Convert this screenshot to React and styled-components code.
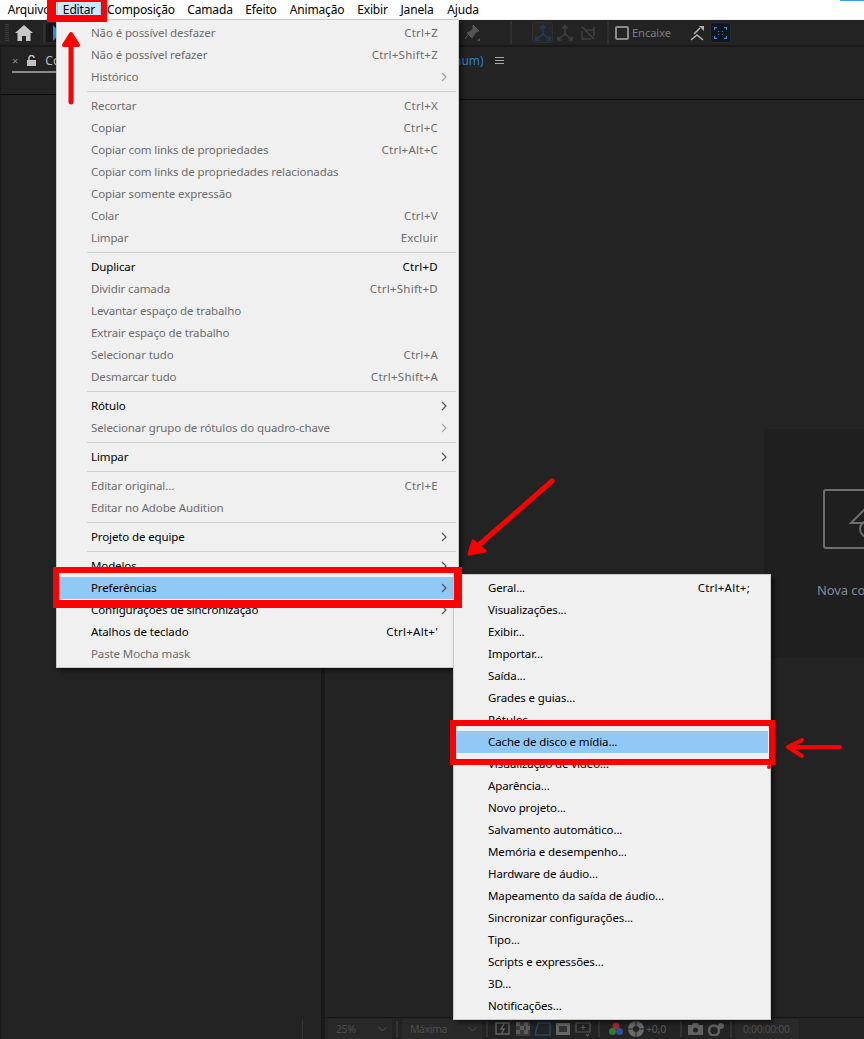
import React from 'react';
import styled, { createGlobalStyle } from 'styled-components';

const GlobalStyle = createGlobalStyle`
  html, body, #root {
    margin: 0;
    height: 100%;
  }
  body {
    background: #232323;
    font-family: "Noto Sans", "Open Sans", sans-serif;
    font-size: 12px;
    overflow: hidden;
  }
`;

const Screen = styled.div`
  position: relative;
  display: flex;
  flex-direction: column;
  height: 100vh;
  overflow: hidden;
`;

const MenuBar = styled.nav`
  display: flex;
  flex: none;
  height: 19px;
  padding-left: 1px;
  background: #fff;
  border-bottom: 1px solid #f0f0f0;
`;

const BarItem = styled.span`
  display: flex;
  align-items: center;
  width: ${p => p.$w}px;
  justify-content: center;
  box-sizing: border-box;
  color: #000;
  letter-spacing: -0.15px;
  ${p => p.$active && 'background: #cce8ff; border: 1px solid #99d1ff; height: 18px;'}
`;

const WindowEdge = styled.span`
  margin-left: auto;
  width: 24px;
  height: 1px;
  background: #3b9bf0;
`;

const Toolbar = styled.div`
  display: flex;
  flex: none;
  align-items: center;
  height: 25px;
  padding-left: 5px;
  background: #232323;
  border-bottom: 2px solid #191919;
`;

const Grip = styled.span`
  width: 4px;
  height: 18px;
  margin-right: 6px;
  background: repeating-linear-gradient(#3c3c3c 0 1px, transparent 1px 2px);
`;

const ToolDivider = styled.span`
  flex: none;
  width: 2px;
  height: 23px;
  margin-left: ${p => p.$left}px;
  background: #2f2f2f;
`;

const ToolButton = styled.span`
  display: flex;
  flex: none;
  align-items: center;
  justify-content: center;
  box-sizing: border-box;
  width: ${p => p.$w || 21}px;
  height: 21px;
  margin-left: ${p => p.$ml || 0}px;
  border-radius: 3px;
  background: ${p => p.$bg || 'transparent'};
  border: 1px solid ${p => p.$line || 'transparent'};
`;

const SnapBox = styled.span`
  flex: none;
  box-sizing: border-box;
  width: 14px;
  height: 14px;
  margin-left: 6px;
  border: 2px solid #8a8a8a;
  border-radius: 2px;
`;

const SnapLabel = styled.span`
  margin-left: 3px;
  color: #7d7d7d;
  font-size: 11px;
`;

const Panels = styled.div`
  display: flex;
  flex: 1;
  min-height: 0;
`;

const LeftPanel = styled.section`
  display: flex;
  flex: none;
  flex-direction: column;
  box-sizing: border-box;
  width: 321px;
  background: #232323;
  border-left: 1px solid #1a1a1a;
`;

const LeftHeader = styled.header`
  display: flex;
  flex: none;
  align-items: flex-start;
  box-sizing: border-box;
  height: 48px;
  padding: 6px 0 0 11px;
  border-bottom: 1px solid #0c0c0c;
`;

const TabClose = styled.span`
  color: #8c8c8c;
  font-size: 11px;
  line-height: 16px;
`;

const TabLock = styled.span`
  display: flex;
  margin: 2px 0 0 9px;
`;

const TabTitle = styled.span`
  margin-left: 9px;
  color: #bdbdbd;
  line-height: 16px;
`;

const TabUnderline = styled.div`
  width: 44px;
  height: 2px;
  margin: -24px 0 0 11px;
  background: #8a8a8a;
`;

const LeftBody = styled.div`
  flex: 1;
  margin-top: 22px;
`;

const LeftFooter = styled.footer`
  display: flex;
  flex: none;
  justify-content: flex-end;
  height: 19px;
  padding-right: 18px;
`;

const FooterTick = styled.span`
  width: 1px;
  background: #353535;
`;

const Gutter = styled.div`
  flex: none;
  width: 4px;
  background: #191919;
`;

const RightPanel = styled.section`
  display: flex;
  flex: 1;
  flex-direction: column;
  min-width: 0;
  background: #232323;
  overflow: hidden;
`;

const RightHeader = styled.header`
  display: flex;
  flex: none;
  align-items: flex-start;
  box-sizing: border-box;
  height: 53px;
  padding: 6px 0 0 129px;
  border-bottom: 1px solid #0c0c0c;
`;

const CompName = styled.span`
  color: #2a7fd6;
  line-height: 16px;
`;

const MenuLines = styled.span`
  display: flex;
  margin: 3px 0 0 11px;
`;

const Viewer = styled.div`
  flex: 1;
  min-height: 0;
  padding: 329px 0 0 439px;
`;

const StartCard = styled.div`
  box-sizing: border-box;
  width: 300px;
  height: 229px;
  padding: 60px 0 0 59px;
  background: #1f1f1f;
`;

const StartLabel = styled.div`
  margin: 25px 0 0 -6px;
  color: #7f8b96;
  font-size: 13px;
  letter-spacing: -0.1px;
  line-height: 20px;
`;

const ViewerFooter = styled.footer`
  display: flex;
  flex: none;
  align-items: stretch;
  box-sizing: border-box;
  height: 22px;
  padding: 1px 0 0 3px;
  border-top: 1px solid #191919;
`;

const SelectField = styled.span`
  display: flex;
  flex: none;
  align-items: center;
  justify-content: space-between;
  box-sizing: border-box;
  width: ${p => p.$w}px;
  padding: 0 5px 0 8px;
  border-radius: 2px 2px 0 0;
  background: #292929;
  color: #4d4d4d;
  font-size: 10.5px;
  letter-spacing: -0.4px;
`;

const FooterDivider = styled.span`
  flex: none;
  width: 2px;
  margin: 2px ${p => p.$right || 4}px 2px ${p => p.$left || 4}px;
  background: #333;
`;

const FooterIcon = styled.span`
  display: flex;
  flex: none;
  align-items: center;
  justify-content: center;
  width: ${p => p.$w || 20}px;
`;

const Exposure = styled.span`
  flex: none;
  display: flex;
  align-items: center;
  width: 20px;
  color: #5a5a5a;
  font-size: 10.5px;
  letter-spacing: -0.2px;
`;

const Menu = styled.div`
  position: absolute;
  top: ${p => p.$top}px;
  left: ${p => p.$left}px;
  box-sizing: border-box;
  width: ${p => p.$w}px;
  padding: 2px;
  background: #f0f0f0;
  border: 1px solid #c9c9c9;
  box-shadow: 3px 3px 4px rgba(0, 0, 0, 0.5);
`;

const Row = styled.div`
  display: grid;
  grid-template-columns: 1fr auto 18px;
  align-items: center;
  box-sizing: border-box;
  height: 22px;
  padding: 0 0 1px 32px;
  font-size: 11.5px;
  letter-spacing: -0.12px;
  color: ${p => (p.$off ? '#6d6d6d' : '#000')};
  background: ${p => (p.$hot ? '#90c8f6' : 'transparent')};
`;

const Shortcut = styled.span`
  letter-spacing: 0.25px;
`;

const Chevron = styled.svg`
  justify-self: end;
  margin-right: 9px;
`;

const Separator = styled.div`
  height: 1px;
  margin: 3px 0 3px 28px;
  background: #cfcfcf;
`;

const Callout = styled.div`
  position: absolute;
  top: ${p => p.$y}px;
  left: ${p => p.$x}px;
  width: ${p => p.$w}px;
  height: ${p => p.$h}px;
  box-sizing: border-box;
  border-style: solid;
  border-color: #f00;
  border-width: ${p => p.$border};
`;

const Pointer = styled.svg`
  position: absolute;
  top: 0;
  left: 0;
  width: 864px;
  height: 1039px;
  pointer-events: none;
`;

const editMenu = [
  { label: 'Não é possível desfazer', keys: 'Ctrl+Z', off: true },
  { label: 'Não é possível refazer', keys: 'Ctrl+Shift+Z', off: true },
  { label: 'Histórico', sub: true, off: true },
  'sep',
  { label: 'Recortar', keys: 'Ctrl+X', off: true },
  { label: 'Copiar', keys: 'Ctrl+C', off: true },
  { label: 'Copiar com links de propriedades', keys: 'Ctrl+Alt+C', off: true },
  { label: 'Copiar com links de propriedades relacionadas', off: true },
  { label: 'Copiar somente expressão', off: true },
  { label: 'Colar', keys: 'Ctrl+V', off: true },
  { label: 'Limpar', keys: 'Excluir', off: true },
  'sep',
  { label: 'Duplicar', keys: 'Ctrl+D' },
  { label: 'Dividir camada', keys: 'Ctrl+Shift+D', off: true },
  { label: 'Levantar espaço de trabalho', off: true },
  { label: 'Extrair espaço de trabalho', off: true },
  { label: 'Selecionar tudo', keys: 'Ctrl+A', off: true },
  { label: 'Desmarcar tudo', keys: 'Ctrl+Shift+A', off: true },
  'sep',
  { label: 'Rótulo', sub: true },
  { label: 'Selecionar grupo de rótulos do quadro-chave', sub: true, off: true },
  'sep',
  { label: 'Limpar', sub: true },
  'sep',
  { label: 'Editar original...', keys: 'Ctrl+E', off: true },
  { label: 'Editar no Adobe Audition', off: true },
  'sep',
  { label: 'Projeto de equipe', sub: true },
  'sep',
  { label: 'Modelos', sub: true },
  { label: 'Preferências', sub: true, hot: true },
  { label: 'Configurações de sincronização', sub: true },
  { label: 'Atalhos de teclado', keys: "Ctrl+Alt+'" },
  { label: 'Paste Mocha mask', off: true },
];

const prefsMenu = [
  { label: 'Geral...', keys: 'Ctrl+Alt+;' },
  { label: 'Visualizações...' },
  { label: 'Exibir...' },
  { label: 'Importar...' },
  { label: 'Saída...' },
  { label: 'Grades e guias...' },
  { label: 'Rótulos...' },
  { label: 'Cache de disco e mídia...', hot: true },
  { label: 'Visualização de vídeo...' },
  { label: 'Aparência...' },
  { label: 'Novo projeto...' },
  { label: 'Salvamento automático...' },
  { label: 'Memória e desempenho...' },
  { label: 'Hardware de áudio...' },
  { label: 'Mapeamento da saída de áudio...' },
  { label: 'Sincronizar configurações...' },
  { label: 'Tipo...' },
  { label: 'Scripts e expressões...' },
  { label: '3D...' },
  { label: 'Notificações...' },
];

const barItems = [
  ['Arquivo', 56], ['Editar', 44], ['Composição', 80], ['Camada', 58], ['Efeito', 44],
  ['Animação', 68], ['Exibir', 43], ['Janela', 46], ['Ajuda', 46],
];

const MenuItems = ({ items }) =>
  items.map((item, i) =>
    item === 'sep' ? (
      <Separator key={i} />
    ) : (
      <Row key={i} $off={item.off} $hot={item.hot}>
        <span>{item.label}</span>
        <Shortcut>{item.keys}</Shortcut>
        {item.sub ? (
          <Chevron width="6" height="10" viewBox="0 0 6 10">
            <path d="M1 1l4 4-4 4" fill="none" stroke={item.off ? '#a5a5a5' : '#555'} strokeWidth="1.2" />
          </Chevron>
        ) : <span />}
      </Row>
    )
  );

const AxisIcon = ({ color }) => (
  <svg width="18" height="18" viewBox="0 0 18 18" fill="none" stroke={color} strokeWidth="1.6">
    <path d="M9 2v8M9 10l-6 5M9 10l6 5" />
    <path d="M6.5 4.5L9 1.5l2.5 3M2 12.5v3.5h3.5M16 12.5v3.5h-3.5" />
  </svg>
);

export default function App() {
  return (
    <Screen>
      <GlobalStyle />
      <MenuBar>
        {barItems.map(([label, w]) => (
          <BarItem key={label} $w={w} $active={label === 'Editar'}>{label}</BarItem>
        ))}
        <WindowEdge />
      </MenuBar>

      <Toolbar>
        <Grip />
        <svg width="18" height="16" viewBox="0 0 18 16">
          <path d="M9 0L0 8h2.500v8h4.500v-5h4v5h4.500V8H18z" fill="#c8c8c8" />
        </svg>
        <ToolDivider $left={10} />
        <ToolButton $w={24} $bg="#161616" $line="#2c2c2c">
          <svg width="8" height="16" viewBox="0 0 8 16">
            <path d="M0 0l7 8-7 8z" fill="#2d8ceb" />
          </svg>
        </ToolButton>
        <ToolButton $ml={392}>
          <svg width="18" height="18" viewBox="0 0 18 18">
            <path d="M10 1l6 6-3 1-3 4-1 2-5-5 2-1 4-3zM5 11l-3 4" fill="#555" stroke="#555" />
            <path d="M17 17v-3l-3 3z" fill="#555" />
          </svg>
        </ToolButton>
        <ToolDivider $left={28} />
        <ToolButton $ml={20} $bg="#262626" $line="#303030">
          <AxisIcon color="#1f3d5e" />
        </ToolButton>
        <ToolButton $ml={1}><AxisIcon color="#404040" /></ToolButton>
        <ToolButton $ml={2}>
          <svg width="16" height="16" viewBox="0 0 16 16" fill="none" stroke="#404040" strokeWidth="1.500">
            <path d="M2 2l4 3h8M14 2v9M2 2l12 12M2 6v8h9" />
          </svg>
        </ToolButton>
        <ToolDivider $left={9} />
        <SnapBox />
        <SnapLabel>Encaixe</SnapLabel>
        <ToolButton $ml={15}>
          <svg width="16" height="16" viewBox="0 0 16 16" fill="none" stroke="#b5b5b5" strokeWidth="1.500">
            <path d="M2 15l6-5 6 5M5 9l6-6" />
            <path d="M10 1h5v5z" fill="#b5b5b5" stroke="none" />
          </svg>
        </ToolButton>
        <ToolButton $ml={3} $bg="#12171c" $line="#2b2b2b">
          <svg width="13" height="12" viewBox="0 0 13 12" fill="none" stroke="#2d84d8" strokeWidth="1.200">
            <path d="M.6 3V.6h2.400M10 .6h2.400V3M12.400 9v2.400H10M3 11.400H.6V9" />
            <path d="M4.500 4v1M8.500 4v1M4.500 7v1M8.500 7v1" />
          </svg>
        </ToolButton>
      </Toolbar>

      <Panels>
        <LeftPanel>
          <LeftHeader>
            <TabClose>×</TabClose>
            <TabLock>
              <svg width="9" height="11" viewBox="0 0 9 11">
                <path d="M2 5V3a2.500 2.500 0 0 1 5 0" fill="none" stroke="#c0c0c0" strokeWidth="1.500" />
                <path d="M0 5h9v6H0z" fill="#c0c0c0" />
              </svg>
            </TabLock>
            <TabTitle>Co</TabTitle>
          </LeftHeader>
          <TabUnderline />
          <LeftBody />
          <LeftFooter><FooterTick /></LeftFooter>
        </LeftPanel>
        <Gutter />
        <RightPanel>
          <RightHeader>
            <CompName>num)</CompName>
            <MenuLines>
              <svg width="9" height="9" viewBox="0 0 9 9" stroke="#aaa">
                <path d="M0 1.500h9M0 4.500h9M0 7.500h9" />
              </svg>
            </MenuLines>
          </RightHeader>
          <Viewer>
            <StartCard>
              <svg width="80" height="62" viewBox="0 0 80 62" fill="none" stroke="#6e6e6e" strokeWidth="2">
                <rect x="1" y="1" width="78" height="58" rx="2" />
                <path d="M44 18L28 34h14" />
                <circle cx="45" cy="40" r="8" />
              </svg>
              <StartLabel>Nova co</StartLabel>
            </StartCard>
          </Viewer>
          <ViewerFooter>
            <SelectField $w={64}>
              25%
              <svg width="9" height="6" viewBox="0 0 9 6"><path d="M.5 1l4 4 4-4" fill="none" stroke="#4d4d4d" /></svg>
            </SelectField>
            <FooterDivider />
            <SelectField $w={80}>
              Máxima
              <svg width="9" height="6" viewBox="0 0 9 6"><path d="M.5 1l4 4 4-4" fill="none" stroke="#4d4d4d" /></svg>
            </SelectField>
            <FooterDivider $right={5} />
            <FooterIcon>
              <svg width="16" height="15" viewBox="0 0 16 15" fill="none" stroke="#666" strokeWidth="1.300">
                <path d="M1 1h13v11H1zM9 2L6 7h3l-2 4" />
              </svg>
            </FooterIcon>
            <FooterIcon>
              <svg width="14" height="14" viewBox="0 0 14 14">
                <rect width="14" height="14" fill="#3a3a3a" />
                <path d="M0 0h4v4H0zM8 0h4v4H8zM4 4h4v4H4zM10 4h4v4h-4zM0 8h4v4H0zM8 8h4v4H8z" fill="#5c5c5c" />
              </svg>
            </FooterIcon>
            <FooterIcon>
              <svg width="18" height="16" viewBox="0 0 18 16" fill="none" stroke="#24466b" strokeWidth="1.500">
                <path d="M4 2h12v12H1z" />
              </svg>
            </FooterIcon>
            <FooterIcon>
              <svg width="14" height="12" viewBox="0 0 14 12"><path d="M0 0h14v12H0z" fill="#666" /><path d="M3 3h8v6H3z" fill="#333" /></svg>
            </FooterIcon>
            <FooterIcon>
              <svg width="16" height="15" viewBox="0 0 16 15" fill="none" stroke="#565656" strokeWidth="1.200">
                <path d="M1 1h14v9H1zM8 3v5M5.500 5.500h5M11 12l1.500 2 1.500-2" />
              </svg>
            </FooterIcon>
            <FooterDivider $left={5} $right={6} />
            <FooterIcon>
              <svg width="14" height="15" viewBox="0 0 14 15">
                <circle cx="7" cy="4" r="3.500" fill="#a52a2a" />
                <circle cx="3.500" cy="9.500" r="3.500" fill="#2e7d32" />
                <circle cx="10.500" cy="9.500" r="3.500" fill="#2b4f9e" />
              </svg>
            </FooterIcon>
            <FooterIcon>
              <svg width="16" height="16" viewBox="0 0 16 16">
                <circle cx="8" cy="8" r="8" fill="#6a6a6a" />
                <circle cx="8" cy="8" r="3" fill="#232323" />
                <path d="M8 0v5M16 8h-5M8 16v-5M0 8h5" stroke="#232323" />
              </svg>
            </FooterIcon>
            <Exposure>+0,0</Exposure>
            <FooterDivider $left={14} $right={4} />
            <FooterIcon $w={18}>
              <svg width="15" height="12" viewBox="0 0 15 12">
                <path d="M0 2h4l1-2h5l1 2h4v10H0z" fill="#626262" />
                <circle cx="7.500" cy="7" r="2.500" fill="#232323" />
              </svg>
            </FooterIcon>
            <FooterIcon $w={22}>
              <svg width="18" height="13" viewBox="0 0 18 13">
                <circle cx="8" cy="7.500" r="5" fill="none" stroke="#626262" strokeWidth="2.500" />
                <circle cx="15" cy="3" r="3" fill="#626262" />
              </svg>
            </FooterIcon>
            <FooterDivider $left={4} $right={3} />
            <SelectField $w={64}>0:00:00:00</SelectField>
          </ViewerFooter>
        </RightPanel>
      </Panels>

      <Menu $top={19} $left={56} $w={403}>
        <MenuItems items={editMenu} />
      </Menu>
      <Menu $top={574} $left={453} $w={318}>
        <MenuItems items={prefsMenu} />
      </Menu>

      <Callout $x={47} $y={0} $w={60} $h={22} $border="2px 6px 7px 9px" />
      <Callout $x={53} $y={567} $w={409} $h={41} $border="6px 8px 8px 6px" />
      <Callout $x={450} $y={720} $w={325} $h={45} $border="6px 6px 6px 6px" />

      <Pointer viewBox="0 0 864 1039" fill="none" stroke="#f00" strokeLinecap="round" strokeLinejoin="round">
        <path d="M71 102V40" strokeWidth="5" />
        <path d="M64 45l7-11 7 11z" fill="#f00" strokeWidth="4" />
        <path d="M552 481L472 551" strokeWidth="5" />
        <path d="M469 554l4-13 12 10z" fill="#f00" strokeWidth="3" />
        <path d="M840 747H790" strokeWidth="4" />
        <path d="M802 740l-14 7 14 9" strokeWidth="4" />
        <circle cx="769" cy="767" r="2" fill="#f00" stroke="none" />
      </Pointer>
    </Screen>
  );
}
